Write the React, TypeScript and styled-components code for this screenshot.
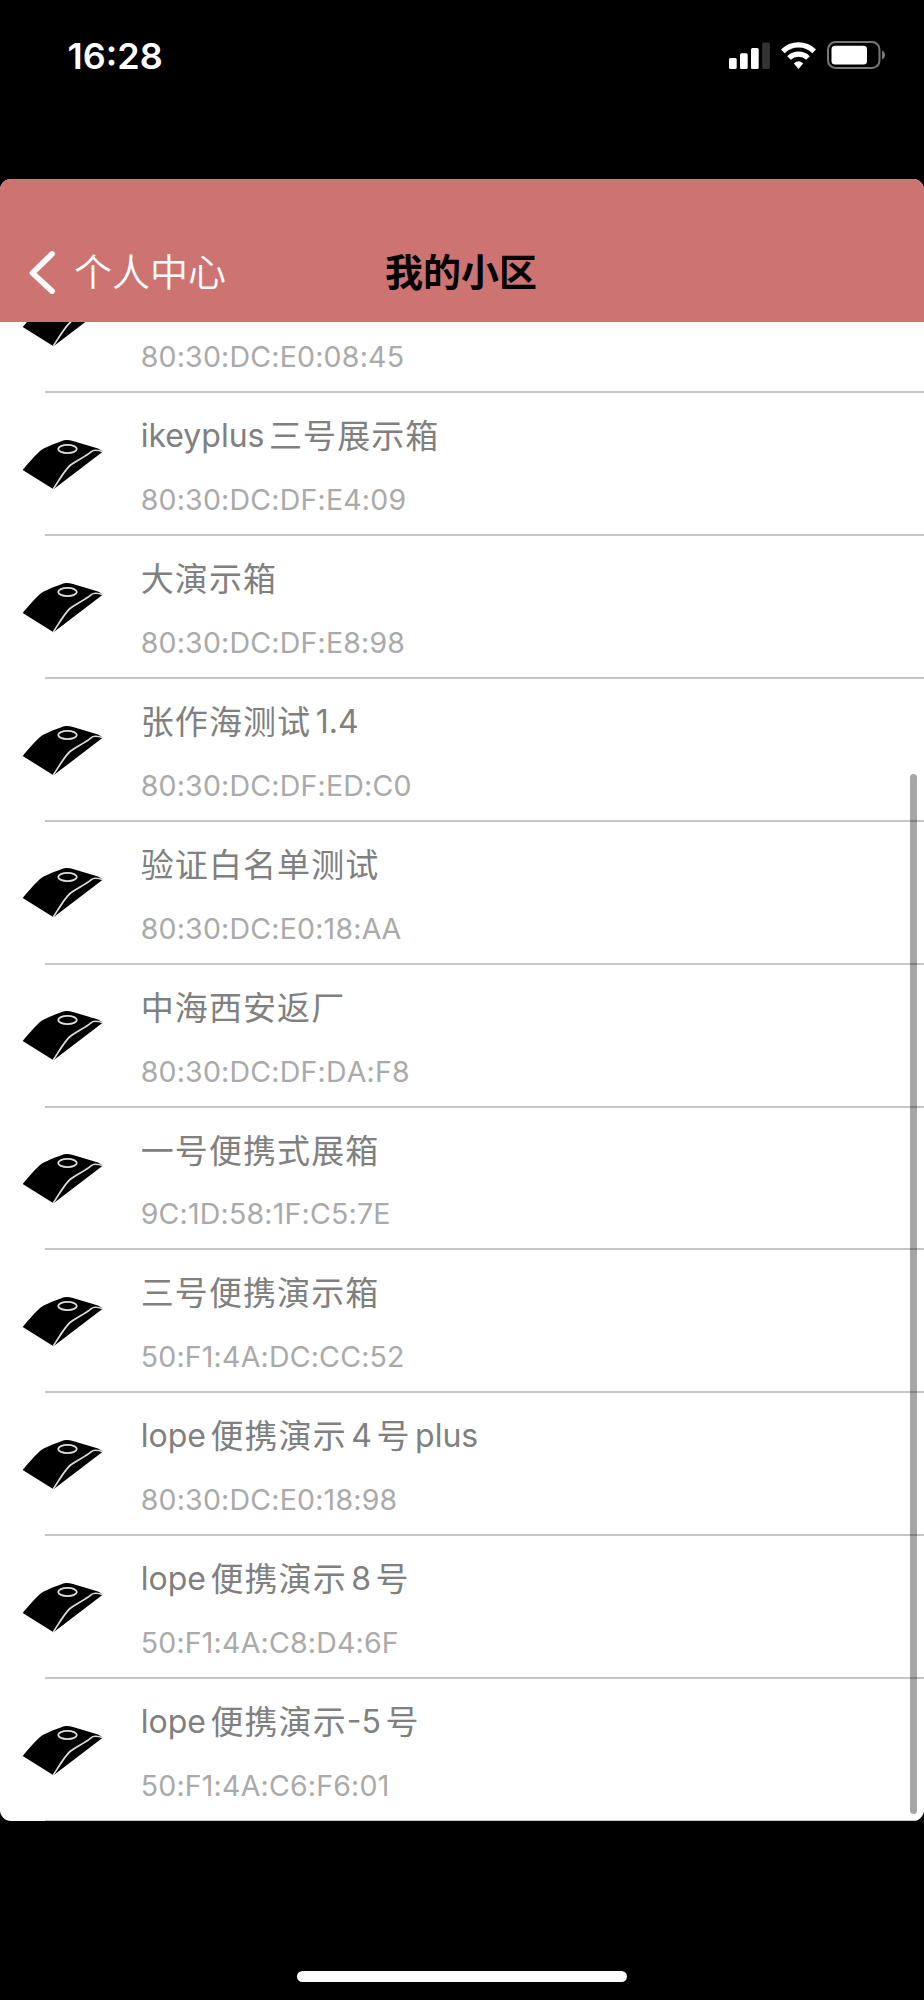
import React from "react";
import styled, { createGlobalStyle } from "styled-components";

const GlobalStyle = createGlobalStyle`
  body { margin: 0; background: #000; }
  * { box-sizing: border-box; }
`;

const Phone = styled.div`
  width: 924px;
  height: 2000px;
  background: #000;
  display: flex;
  flex-direction: column;
  overflow: hidden;
  font-family: Inter, "Noto Sans CJK SC", sans-serif;
`;

const StatusBar = styled.header`
  flex: none;
  height: 178.7px;
  padding: 34px 38px 0 67.5px;
  display: flex;
  align-items: flex-start;
  justify-content: space-between;
  color: #fff;
`;

const Clock = styled.span`
  font-size: 36px;
  line-height: 44px;
  font-weight: 600;
`;

const StatusIcons = styled.div`
  display: flex;
  gap: 11px;
  padding-top: 7px;
`;

const Screen = styled.main`
  flex: none;
  position: relative;
  height: 1642.5px;
  border-radius: 11px;
  background: #fff;
  overflow: hidden;
  display: flex;
  flex-direction: column;
`;

const NavBar = styled.nav`
  flex: none;
  height: 143px;
  padding: 44px 31px 0 29px;
  background: #cd7372;
  display: grid;
  grid-template-columns: 1fr auto 1fr;
  align-items: center;
`;

const BackLink = styled.a`
  display: flex;
  align-items: center;
  gap: 19px;
  color: #fff;
  font-size: 38px;
  line-height: 44px;
  font-weight: 350;
`;

const Title = styled.h1`
  margin: 0;
  color: #000;
  font-size: 38px;
  line-height: 44px;
  font-weight: 600;
`;

const List = styled.ul`
  flex: 1;
  min-height: 0;
  margin: 0 0 -0.7px;
  padding: 0;
  list-style: none;
  overflow: hidden;
  display: flex;
  flex-direction: column;
  justify-content: flex-end;
`;

const Row = styled.li`
  flex: none;
  height: 142.87px;
  padding-left: 22px;
  display: flex;
  align-items: flex-start;
  gap: 36.7px;
  background: linear-gradient(#c6c6c8, #c6c6c8) 45px 100% / 100% 2px no-repeat;
`;

const DeviceIcon = styled.svg`
  flex: none;
  width: 82px;
  height: 52px;
  margin-top: 45.5px;
`;

const Details = styled.div`
  padding-top: 20px;
`;

const Name = styled.div`
  display: flex;
  height: 46px;
  line-height: 46px;
  color: #808080;
  white-space: nowrap;
`;

const Run = styled.span<{ $cjk: boolean; $spaced: boolean }>`
  font-size: ${(p) => (p.$cjk ? 33 : 32)}px;
  letter-spacing: ${(p) => (p.$cjk ? 1.1 : 0)}px;
  margin-left: ${(p) => (p.$spaced ? 4.5 : 0)}px;
`;

const Address = styled.div`
  margin-top: 22.8px;
  line-height: 36px;
  font-size: 28.5px;
  letter-spacing: 0.2px;
  font-kerning: none;
  color: #aaa;
`;

const ScrollThumb = styled.div`
  position: absolute;
  right: 7px;
  top: 595.5px;
  width: 7px;
  height: 1040px;
  border-radius: 4px;
  background: rgba(0, 0, 0, 0.35);
`;

const HomeArea = styled.footer`
  flex: 1;
  display: flex;
  align-items: flex-end;
  justify-content: center;
  padding-bottom: 18px;
`;

const HomeIndicator = styled.div`
  width: 330px;
  height: 11px;
  border-radius: 6px;
  background: #fff;
`;

const devices = [
  { name: "", address: "80:30:DC:E0:08:45" },
  { name: "ikeyplus三号展示箱", address: "80:30:DC:DF:E4:09" },
  { name: "大演示箱", address: "80:30:DC:DF:E8:98" },
  { name: "张作海测试1.4", address: "80:30:DC:DF:ED:C0" },
  { name: "验证白名单测试", address: "80:30:DC:E0:18:AA" },
  { name: "中海西安返厂", address: "80:30:DC:DF:DA:F8" },
  { name: "一号便携式展箱", address: "9C:1D:58:1F:C5:7E" },
  { name: "三号便携演示箱", address: "50:F1:4A:DC:CC:52" },
  { name: "lope便携演示4号plus", address: "80:30:DC:E0:18:98" },
  { name: "lope便携演示8号", address: "50:F1:4A:C8:D4:6F" },
  { name: "lope便携演示-5号", address: "50:F1:4A:C6:F6:01" },
];

const splitRuns = (name: string) => name.match(/[\u4e00-\u9fff]+|[^\u4e00-\u9fff]+/g) ?? [];

function Reader() {
  return (
    <DeviceIcon viewBox="0 0 82 52">
      <path d="M.7 31 C8 22.500 14 15 20 10.500 C27 6.500 37 3 42 1.200 Q46 .3 51 2 L76 9.500 L81 12.500 L31.500 50.300Z" fill="#000" />
      <path d="M31.300 50 C36 43 42 32 48 26.500 C54 21.500 63 18 69 12.800 C71 11 76 11 81 12.800" fill="none" stroke="#ddd" strokeWidth="1.700" />
      <ellipse cx="45.500" cy="10" rx="9.300" ry="4.100" fill="none" stroke="#ddd" strokeWidth="1.800" />
    </DeviceIcon>
  );
}

export default function App() {
  return (
    <>
      <GlobalStyle />
      <Phone>
        <StatusBar>
          <Clock>16:28</Clock>
          <StatusIcons>
            <svg width="41" height="28" viewBox="0 0 41 28" fill="#fff">
              <rect x="0" y="17" width="7.700" height="11" rx="1.500" />
              <rect x="11" y="12.300" width="7.700" height="15.700" rx="1.500" />
              <rect x="22" y="7" width="7.700" height="21" rx="1.500" />
              <rect x="33.200" y="1.500" width="7.700" height="26.500" rx="1.500" fill="#333" />
            </svg>
            <svg width="35" height="28" viewBox="0 0 35 28" fill="none" stroke="#fff" strokeWidth="5.200">
              <path d="M1.800 10.300 A22.500 22.500 0 0 1 33.200 10.300" />
              <path d="M8 17 A13.700 13.700 0 0 1 27 17" />
              <path d="M17.500 28 L12.800 22.500 Q17.500 17.800 22.200 22.500Z" fill="#fff" stroke="none" />
            </svg>
            <svg width="59" height="28" viewBox="0 0 59 28">
              <rect x="1" y="1" width="51.500" height="26" rx="7.500" fill="none" stroke="#777" strokeWidth="2" />
              <rect x="4.500" y="4.800" width="35.500" height="18.700" rx="3.500" fill="#fff" />
              <path d="M55 9.500 Q58 11 58 14 Q58 17 55 18.500Z" fill="#777" />
            </svg>
          </StatusIcons>
        </StatusBar>
        <Screen>
          <NavBar>
            <BackLink>
              <svg width="26" height="44" viewBox="0 0 26 44" fill="none" stroke="#fff" strokeWidth="5.700">
                <path d="M23 4 L3.500 23 L23 41.200" strokeLinecap="round" strokeLinejoin="round" />
              </svg>
              个人中心
            </BackLink>
            <Title>我的小区</Title>
          </NavBar>
          <List>
            {devices.map((d) => (
              <Row key={d.address}>
                <Reader />
                <Details>
                  <Name>
                    {splitRuns(d.name).map((r, i) => (
                      <Run key={i} $cjk={/[\u4e00-\u9fff]/.test(r)} $spaced={i > 0 && !r.startsWith("-")}>
                        {r}
                      </Run>
                    ))}
                  </Name>
                  <Address>{d.address}</Address>
                </Details>
              </Row>
            ))}
          </List>
          <ScrollThumb />
        </Screen>
        <HomeArea>
          <HomeIndicator />
        </HomeArea>
      </Phone>
    </>
  );
}
